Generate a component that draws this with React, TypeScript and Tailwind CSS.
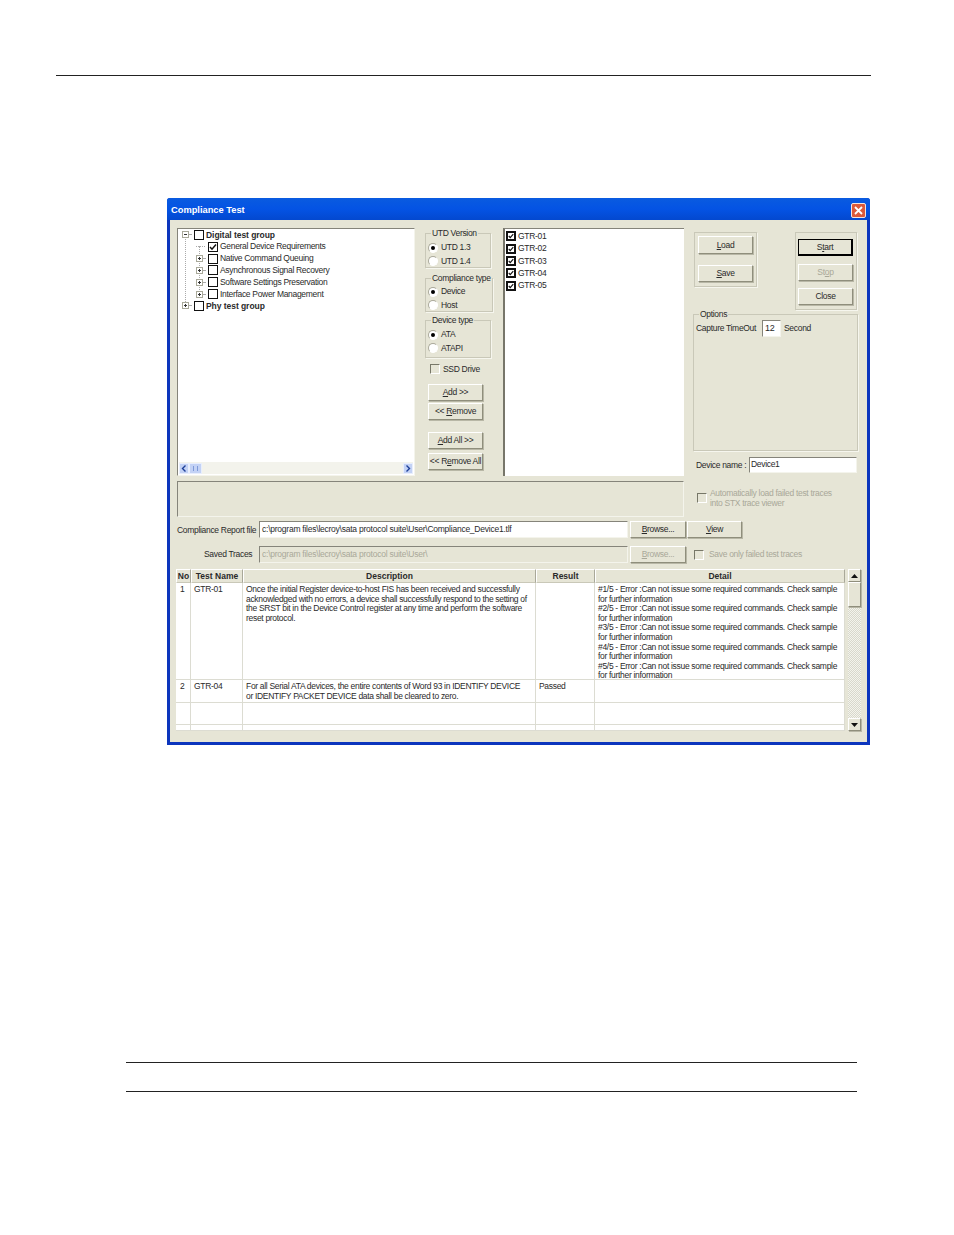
import type { ReactNode } from "react";

const raised =
  "border border-t-white border-l-white border-r-[#8f8e7c] border-b-[#8f8e7c] shadow-[1px_1px_0_#b8b7a6]";
const sunken = "border border-t-[#85847a] border-l-[#85847a] border-r-[#f4f4ec] border-b-[#f4f4ec]";

const Btn = ({
  children,
  className = "",
  disabled = false,
  strong = false,
}: {
  children: ReactNode;
  className?: string;
  disabled?: boolean;
  strong?: boolean;
}) => (
  <div
    className={`flex items-center justify-center w-[55px] h-[17px] whitespace-nowrap ${
      strong ? "border border-black border-b-2 border-r-2" : raised
    } ${disabled ? "text-[#a9a899]" : ""} ${className}`}
  >
    <span>{children}</span>
  </div>
);

const Check = ({ on = false, soft = false, className = "" }: { on?: boolean; soft?: boolean; className?: string }) => (
  <div
    className={`w-[10px] h-[10px] shrink-0 border flex items-center justify-center ${
      soft ? "border-[#777768] border-b-white border-r-white bg-[#e6e5d6]" : "border-[#111] bg-white"
    } ${className}`}
  >
    {on && (
      <svg width="8" height="8" viewBox="0 0 8 8">
        <path d="M1 4 L3 6.2 L7 1.4" fill="none" stroke="#111" strokeWidth="1.5" />
      </svg>
    )}
  </div>
);

const Radio = ({ label, on = false }: { label: string; on?: boolean }) => (
  <div className="flex items-center h-[13.5px]">
    <div className="w-[10px] h-[10px] rounded-full bg-white border border-[#aaa99a] border-b-white border-r-white flex items-center justify-center shrink-0">
      {on && <div className="w-[4px] h-[4px] rounded-full bg-black" />}
    </div>
    <span className="ml-[3px]">{label}</span>
  </div>
);

const Group = ({
  legend,
  className = "",
  children,
}: {
  legend?: string;
  className?: string;
  children?: ReactNode;
}) => (
  <div className={`relative border border-[#c9c8b8] shadow-[1px_1px_0_#f6f6ee] ${className}`}>
    {legend && (
      <span className="absolute -top-[6px] left-[5px] bg-[#e6e5d6] px-px leading-[10px] whitespace-nowrap">
        {legend}
      </span>
    )}
    {children}
  </div>
);

const Expander = ({ open = false }: { open?: boolean }) => (
  <svg width="7" height="7" viewBox="0 0 7 7" className="shrink-0">
    <rect x="0.5" y="0.5" width="6" height="6" fill="#fff" stroke="#a9a99a" />
    <path d={open ? "M2 3.5H5" : "M2 3.5H5M3.5 2V5"} stroke="#333" />
  </svg>
);

const treeRows = [
  { label: "Digital test group", level: 0, open: true, bold: true },
  { label: "General Device Requirements", level: 1, leaf: true, on: true },
  { label: "Native Command Queuing", level: 1 },
  { label: "Asynchronous Signal Recovery", level: 1 },
  { label: "Software Settings Preservation", level: 1 },
  { label: "Interface Power Management", level: 1 },
  { label: "Phy test group", level: 0, bold: true },
];

const ScrollBtn = ({ dir }: { dir: "left" | "right" }) => (
  <div className="w-[10px] h-[11px] bg-[#c3d2f5] border border-[#e8eefc] flex items-center justify-center shrink-0">
    <svg width="6" height="7" viewBox="0 0 6 7">
      <path
        d={dir === "left" ? "M4.5 0.5 L1.5 3.5 L4.5 6.5" : "M1.5 0.5 L4.5 3.5 L1.5 6.5"}
        fill="none"
        stroke="#1d3f98"
        strokeWidth="1.4"
      />
    </svg>
  </div>
);

const Tree = () => (
  <div className={`relative flex flex-col w-[238px] h-[248px] bg-white ${sunken}`}>
    {/* dotted tree guides */}
    <div className="absolute left-[7px] top-[10px] h-[63px] border-l border-dotted border-[#aaa]" />
    <div className="absolute left-[21px] top-[17px] h-[46px] border-l border-dotted border-[#aaa]" />
    <div className="relative pl-[4px] flex flex-col">
      {treeRows.map((row) => (
        <div key={row.label} className={`flex items-center h-[11.85px] ${row.level ? "pl-[14px]" : ""}`}>
          {row.leaf ? (
            <div className="w-[9px] h-0 border-t border-dotted border-[#aaa] shrink-0" />
          ) : (
            <>
              <Expander open={row.open} />
              <div className="w-[2px] h-0 border-t border-dotted border-[#aaa] shrink-0" />
            </>
          )}
          <Check on={row.on} className="ml-[3px]" />
          <span className={`ml-[2px] whitespace-nowrap ${row.bold ? "font-bold tracking-[-0.05px]" : ""}`}>
            {row.label}
          </span>
        </div>
      ))}
    </div>
    <div className="mt-auto mb-[1px] mx-[1px] h-[12px] flex items-center bg-[#f3f3ec]">
      <ScrollBtn dir="left" />
      <div className="w-[13px] h-[11px] bg-[#c3d2f5] border border-[#e8eefc] flex items-center justify-center">
        <div className="w-[5px] h-[5px] border-x border-[#7f9ad8]" />
      </div>
      <div className="flex-1" />
      <ScrollBtn dir="right" />
    </div>
  </div>
);

const Middle = () => (
  <div className="ml-[10px] w-[68px] pt-[5px] flex flex-col">
    <Group legend="UTD Version" className="w-[66px] h-[35px] pt-[7px] pl-[2px]">
      <Radio label="UTD 1.3" on />
      <Radio label="UTD 1.4" />
    </Group>
    <Group legend="Compliance type" className="mt-[10px] w-[68px] h-[34px] pt-[6px] pl-[2px]">
      <Radio label="Device" on />
      <Radio label="Host" />
    </Group>
    <Group legend="Device type" className="mt-[8px] w-[66px] h-[38px] pt-[7px] pl-[2px]">
      <Radio label="ATA" on />
      <Radio label="ATAPI" />
    </Group>
    <div className="mt-[6px] ml-[5px] flex items-center h-[10px]">
      <Check soft />
      <span className="ml-[3px]">SSD Drive</span>
    </div>
    <Btn className="mt-[10px] ml-[3px]">
      <u>A</u>dd &gt;&gt;
    </Btn>
    <Btn className="mt-[2px] ml-[3px]">
      &lt;&lt; <u>R</u>emove
    </Btn>
    <Btn className="mt-[12px] ml-[3px]">
      <u>A</u>dd All &gt;&gt;
    </Btn>
    <Btn className="mt-[4px] ml-[3px]">
      &lt;&lt; R<u>e</u>move All
    </Btn>
  </div>
);

const TestList = () => (
  <div className="ml-[10px] w-[181px] h-[248px] bg-white border-t border-t-[#85847a] border-l-2 border-l-[#77766a] pl-[1px] pt-[1px] flex flex-col">
    {["GTR-01", "GTR-02", "GTR-03", "GTR-04", "GTR-05"].map((name) => (
      <div key={name} className="flex items-center h-[12.4px]">
        <Check on className="border-2" />
        <span className="ml-[2px]">{name}</span>
      </div>
    ))}
  </div>
);

const RightPanel = () => (
  <div className="ml-[9px] w-[165px] pt-[4px] flex flex-col">
    <div className="flex items-start">
      <Group className="ml-px w-[63px] h-[55px] pl-[3px] pt-[3px]">
        <Btn className="h-[18px]">
          <u>L</u>oad
        </Btn>
        <Btn className="mt-[11px]">
          <u>S</u>ave
        </Btn>
      </Group>
      <Group className="ml-[38px] w-[62px] h-[78px] pl-[2px] pt-[6px]">
        <Btn strong>
          S<u>t</u>art
        </Btn>
        <Btn disabled className="mt-[8px]">
          St<u>o</u>p
        </Btn>
        <Btn className="mt-[7px]">Close</Btn>
      </Group>
    </div>
    <Group legend="Options" className="mt-[4px] w-[165px] h-[137px] pl-[2px] pt-[5px]">
      <div className="flex items-center whitespace-nowrap">
        <span className="w-[66px]">Capture TimeOut</span>
        <div className={`w-[19px] h-[17px] bg-white pl-[2px] flex items-center text-[9px] ${sunken}`}>12</div>
        <span className="ml-[3px]">Second</span>
      </div>
    </Group>
    <div className="mt-[6px] flex items-center h-[16px] pl-[3px] whitespace-nowrap">
      <span className="w-[53px]">Device name :</span>
      <div className={`w-[108px] h-[16px] bg-white pl-px leading-[12px] ${sunken}`}>Device1</div>
    </div>
  </div>
);

const cell = "border-r border-b border-[#dcdcd2] px-[3px] leading-[9.6px] overflow-hidden whitespace-nowrap";
const head =
  "h-[14px] flex items-center justify-center font-bold tracking-normal border border-t-white border-l-white border-r-[#a9a899] border-b-[#c9c8b8] bg-[#e6e5d6]";

const details = ["#1/5", "#2/5", "#3/5", "#4/5", "#5/5"];

const Lines = ({ lines }: { lines: string[] }) => (
  <>
    {lines.map((line) => (
      <div key={line}>{line}</div>
    ))}
  </>
);

const ResultTable = () => (
  <div className="mt-[6px] -ml-px flex items-start">
    <div className="w-[669px] h-[162px] bg-white overflow-hidden grid grid-cols-[15px_52px_293px_59px_250px] grid-rows-[14px_97px_23px_22px_6px]">
      <div className={head}>No</div>
      <div className={head}>Test Name</div>
      <div className={head}>Description</div>
      <div className={head}>Result</div>
      <div className={head}>Detail</div>

      <div className={`${cell} pt-[2px] pl-[4px]`}>1</div>
      <div className={`${cell} pt-[2px]`}>GTR-01</div>
      <div className={`${cell} pt-[2px]`}>
        <Lines
          lines={[
            "Once the initial Register device-to-host FIS has been received and successfully",
            "acknowledged with no errors, a device shall successfully respond to the setting of",
            "the SRST bit in the Device Control register at any time and perform the software",
            "reset protocol.",
          ]}
        />
      </div>
      <div className={cell} />
      <div className={`${cell} pt-[2px]`}>
        {details.map((d) => (
          <div key={d}>
            {d} - Error :Can not issue some required commands. Check sample
            <br />
            for further information
          </div>
        ))}
      </div>

      <div className={`${cell} pt-[2px] pl-[4px]`}>2</div>
      <div className={`${cell} pt-[2px]`}>GTR-04</div>
      <div className={`${cell} pt-[2px]`}>
        <Lines
          lines={[
            "For all Serial ATA devices, the entire contents of Word 93 in IDENTIFY DEVICE",
            "or IDENTIFY PACKET DEVICE data shall be cleared to zero.",
          ]}
        />
      </div>
      <div className={`${cell} pt-[2px]`}>Passed</div>
      <div className={cell} />

      {[0, 1, 2, 3, 4, 5, 6, 7, 8, 9].map((i) => (
        <div key={i} className={cell} />
      ))}
    </div>
    <div className="ml-[3px] w-[13px] h-[162px] flex flex-col bg-[repeating-conic-gradient(#f4f4ec_0_25%,#d8d8cc_0_50%)] bg-[length:2px_2px]">
      <div className={`h-[13px] bg-[#e6e5d6] flex items-center justify-center ${raised}`}>
        <svg width="7" height="4" viewBox="0 0 7 4">
          <path d="M3.5 0 L7 4 H0 Z" fill="#111" />
        </svg>
      </div>
      <div className={`h-[25px] bg-[#e6e5d6] ${raised}`} />
      <div className="flex-1" />
      <div className={`h-[13px] bg-[#e6e5d6] flex items-center justify-center ${raised}`}>
        <svg width="7" height="4" viewBox="0 0 7 4">
          <path d="M0 0 H7 L3.5 4 Z" fill="#111" />
        </svg>
      </div>
    </div>
  </div>
);

const inputBox = `h-[17px] pl-[2px] flex items-center tracking-[-0.24px] whitespace-nowrap ${sunken}`;

const App = () => (
  <div className="w-[954px] h-[1235px] bg-white flex flex-col font-['Liberation_Sans',sans-serif] text-[8.5px] tracking-[-0.31px] text-[#2a2a2a]">
    <div className="mt-[75px] ml-[56px] w-[815px] h-px bg-[#222]" />

    <div className="mt-[122px] ml-[167px] w-[703px] h-[547px] bg-[#e6e5d6] border-x-[3px] border-b-[3px] border-[#0c35bd] rounded-t-[3px] flex flex-col">
      <div className="-mx-[3px] h-[22px] shrink-0 rounded-t-[3px] bg-gradient-to-b from-[#0a5be0] via-[#0453e4] to-[#0348cf] flex items-center justify-between px-[4px] pt-[2px] text-white font-bold text-[9.3px] tracking-normal">
        <span className="mt-[2px]">Compliance Test</span>
        <div className="w-[15px] h-[15px] rounded-[2px] bg-[#dc5a3a] border border-[#f3e4de] flex items-center justify-center">
          <svg width="9" height="9" viewBox="0 0 9 9">
            <path d="M1 1 L8 8 M8 1 L1 8" stroke="#fff" strokeWidth="1.8" />
          </svg>
        </div>
      </div>

      <div className="pt-[8px] pl-[7px] flex flex-col">
        <div className="flex items-start h-[248px]">
          <Tree />
          <Middle />
          <TestList />
          <RightPanel />
        </div>

        <div className="mt-[5px] flex items-start">
          <div className={`w-[507px] h-[36px] ${sunken}`} />
          <div className="ml-[13px] flex items-center mt-[7px] text-[#a9a899] leading-[10px]">
            <Check soft className="w-[9px] h-[9px]" />
            <span className="ml-[3px]">
              Automatically load failed test traces
              <br />
              into STX trace viewer
            </span>
          </div>
        </div>

        <div className="mt-[4px] flex items-center">
          <span className="w-[82px] whitespace-nowrap pt-[2px]">Compliance Report file</span>
          <div className={`w-[369px] bg-white ${inputBox}`}>
            c:\program files\lecroy\sata protocol suite\User\Compliance_Device1.tlf
          </div>
          <Btn className="ml-[2px] w-[56px]">
            <u>B</u>rowse...
          </Btn>
          <Btn className="ml-px w-[55px]">
            <u>V</u>iew
          </Btn>
        </div>

        <div className="mt-[8px] flex items-center">
          <span className="w-[82px] pl-[27px] whitespace-nowrap">Saved Traces</span>
          <div className={`w-[369px] text-[#a9a899] ${inputBox}`}>c:\program files\lecroy\sata protocol suite\User\</div>
          <Btn disabled className="ml-[2px] w-[56px]">
            <u>B</u>rowse...
          </Btn>
          <Check soft className="ml-[8px] w-[9px] h-[9px]" />
          <span className="ml-[5px] text-[#a9a899]">Save only failed test traces</span>
        </div>

        <ResultTable />
      </div>
    </div>

    <div className="mt-[317px] ml-[126px] w-[731px] h-px bg-[#222]" />
    <div className="mt-[28px] ml-[126px] w-[731px] h-px bg-[#222]" />
  </div>
);

export default App;
